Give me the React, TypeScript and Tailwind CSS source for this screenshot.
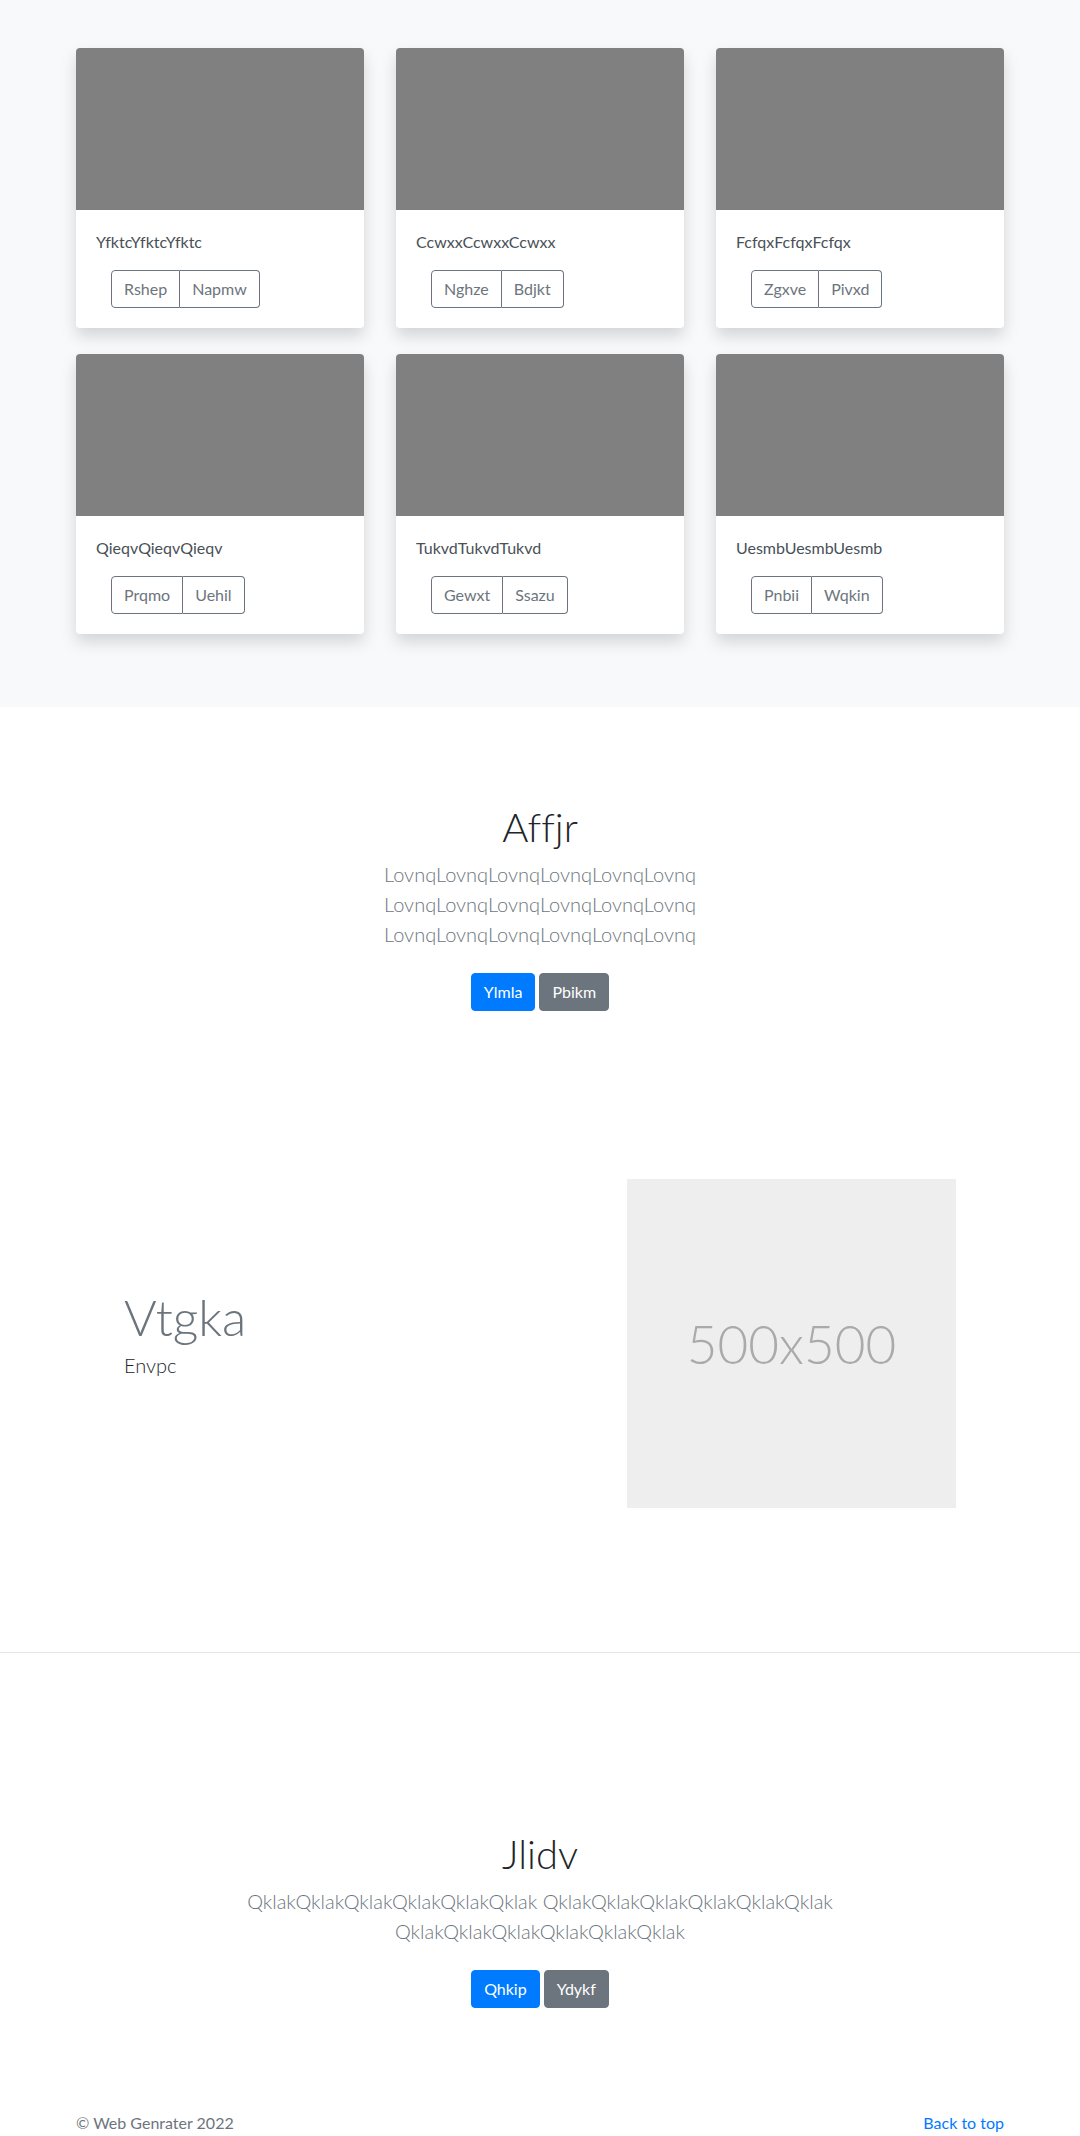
const cards = [
  { title: "YfktcYfktcYfktc", a: "Rshep", b: "Napmw" },
  { title: "CcwxxCcwxxCcwxx", a: "Nghze", b: "Bdjkt" },
  { title: "FcfqxFcfqxFcfqx", a: "Zgxve", b: "Pivxd" },
  { title: "QieqvQieqvQieqv", a: "Prqmo", b: "Uehil" },
  { title: "TukvdTukvdTukvd", a: "Gewxt", b: "Ssazu" },
  { title: "UesmbUesmbUesmb", a: "Pnbii", b: "Wqkin" },
];

function Card({ title, a, b }: { title: string; a: string; b: string }) {
  return (
    <div className="bg-white rounded-[4px] overflow-hidden shadow-[0_0.5rem_1rem_rgba(0,0,0,0.15)]">
      <div className="h-[162px] bg-[#808080]" />
      <div className="p-5">
        <p className="text-base leading-6 text-[#495057] mb-4">{title}</p>
        <div className="ml-[15px] inline-flex text-base leading-6 text-[#6c757d]">
          <button className="px-3 py-1.5 border border-[#6c757d] rounded-l-[4px]">{a}</button>
          <button className="px-3 py-1.5 border border-l-0 border-[#6c757d] rounded-r-[4px]">{b}</button>
        </div>
      </div>
    </div>
  );
}

function Buttons({ a, b }: { a: string; b: string }) {
  return (
    <div className="flex justify-center gap-1 text-base leading-6 text-white">
      <button className="px-3 py-1.5 border border-[#007bff] bg-[#007bff] rounded-[4px]">{a}</button>
      <button className="px-3 py-1.5 border border-[#6c757d] bg-[#6c757d] rounded-[4px]">{b}</button>
    </div>
  );
}

export default function App() {
  const lovnq = "LovnqLovnqLovnqLovnqLovnqLovnq";
  const qklak = "QklakQklakQklakQklakQklakQklak";
  return (
    <div className="font-['Lato','Open_Sans',sans-serif] [font-variant-ligatures:none] text-[#212529] bg-white">
      <section className="bg-[#f8f9fa] pt-12 pb-[73px]">
        <div className="w-[928px] mx-auto grid grid-cols-3 gap-x-8 gap-y-[26px]">
          {cards.map((c) => (
            <Card key={c.title} {...c} />
          ))}
        </div>
      </section>

      <section className="pt-24 pb-[168px] text-center">
        <div className="w-[450px] mx-auto">
          <h1 className="text-[40px] leading-[1.2] font-light text-[#212529] mb-2">Affjr</h1>
          <p className="text-xl leading-[30px] font-light text-[#6c757d] mb-6">
            {lovnq} {lovnq} {lovnq}
          </p>
          <Buttons a="Ylmla" b="Pbikm" />
        </div>
      </section>

      <section className="w-[928px] mx-auto flex items-center">
        <div className="flex-1 pl-12">
          <h2 className="text-[50px] leading-none font-light text-[#6c757d] mb-2">Vtgka</h2>
          <p className="text-xl leading-[30px] font-light text-[#212529] mb-4">Envpc</p>
        </div>
        <div className="w-[329px] h-[329px] mr-12 bg-[#eeeeee] flex items-center justify-center">
          <span className="text-[53px] font-light text-[#aaaaaa]">500x500</span>
        </div>
      </section>

      <hr className="mt-[144px] border-0 border-t border-[#e6e6e6]" />

      <section className="pt-[177px] pb-[103px] text-center">
        <div className="w-[690px] mx-auto">
          <h1 className="text-[40px] leading-[1.2] font-light text-[#212529] mb-2">Jlidv</h1>
          <p className="text-xl leading-[30px] font-light text-[#6c757d] mb-6">
            {qklak} {qklak} {qklak}
          </p>
          <Buttons a="Qhkip" b="Ydykf" />
        </div>
      </section>

      <footer className="w-[928px] mx-auto flex justify-between text-base leading-6 text-[#6c757d] pb-12">
        <p>© Web Genrater 2022</p>
        <a href="#" className="text-[#007bff]">Back to top</a>
      </footer>
    </div>
  );
}
